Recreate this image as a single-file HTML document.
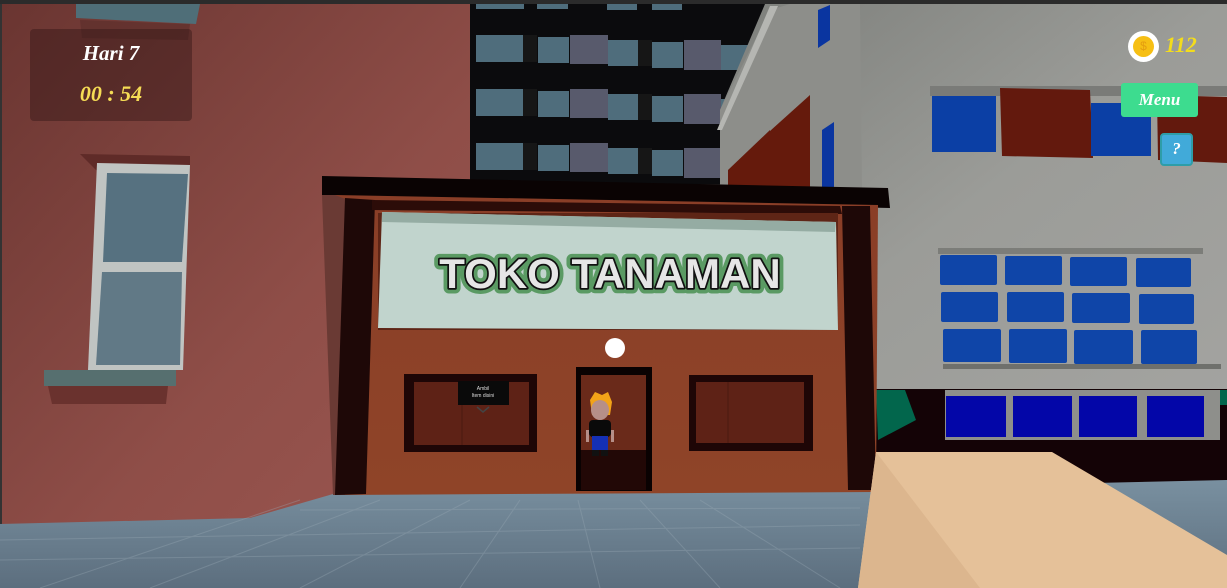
<!DOCTYPE html>
<html><head><meta charset="utf-8"><style>
html,body{margin:0;padding:0;width:1227px;height:588px;overflow:hidden;background:#2b2b2b}
svg{position:absolute;left:0;top:0}
.hud{position:absolute;font-family:"Liberation Serif",serif;font-style:italic;font-weight:bold}
</style></head><body>
<svg width="1227" height="588" viewBox="0 0 1227 588">
<defs>
<linearGradient id="red" x1="0" y1="0" x2="1" y2="1"><stop offset="0" stop-color="#6a3531"/><stop offset="0.6" stop-color="#8f4e48"/><stop offset="1" stop-color="#9a5650"/></linearGradient>
<linearGradient id="gray" x1="0" y1="0" x2="1" y2="1"><stop offset="0" stop-color="#7d7f7b"/><stop offset="0.5" stop-color="#9b9c98"/><stop offset="1" stop-color="#a3a3a0"/></linearGradient>
<linearGradient id="floor" x1="0" y1="0" x2="0" y2="1"><stop offset="0" stop-color="#7990a0"/><stop offset="1" stop-color="#5c6e7e"/></linearGradient>
<linearGradient id="shop" x1="0" y1="0" x2="0" y2="1"><stop offset="0" stop-color="#8a3e27"/><stop offset="1" stop-color="#8f4428"/></linearGradient>
</defs>
<rect x="0" y="0" width="1227" height="4" fill="#2b2b2b"/>
<rect x="2" y="4" width="470" height="520" fill="url(#red)"/>
<rect x="0" y="4" width="2" height="584" fill="#333"/>
<polygon points="76,4 200,4 196,24 76,18" fill="#4f6e78"/>
<polygon points="80,20 190,24 188,40 82,38" fill="#5a2d2a" opacity="0.6"/>
<polygon points="80,154 190,156 190,170 96,170" fill="#5f2b28"/>
<polygon points="97,163 190,165 183,370 88,370" fill="#c0c4c2"/>
<polygon points="107,173 188,174 182,262 103,262" fill="#567180"/>
<polygon points="102,272 182,272 180,365 96,365" fill="#567180" opacity="0.9"/>
<polygon points="44,370 176,370 176,386 44,386" fill="#566f6f"/>
<polygon points="48,386 168,386 166,404 52,404" fill="#6a322e"/>
<rect x="470" y="4" width="300" height="180" fill="#0b0b0d"/>
<g fill="#4f6d7c">
<rect x="476" y="4" width="48" height="5"/><rect x="537" y="4" width="31" height="5"/><rect x="607" y="4" width="30" height="6"/><rect x="652" y="4" width="30" height="6"/>
</g>
<g id="row">
<rect x="476" y="35" width="48" height="27" fill="#4f6d7c"/>
<rect x="523" y="35" width="14" height="27" fill="#161616"/>
<rect x="538" y="37" width="31" height="26" fill="#4f6d7c"/>
<rect x="570" y="35" width="38" height="29" fill="#585a6c"/>
<rect x="608" y="40" width="30" height="26" fill="#4f6d7c"/>
<rect x="638" y="40" width="14" height="26" fill="#161616"/>
<rect x="652" y="42" width="31" height="26" fill="#4f6d7c"/>
<rect x="684" y="40" width="37" height="30" fill="#585a6c"/>
<rect x="721" y="45" width="30" height="25" fill="#4f6d7c"/>
</g>
<use href="#row" y="54"/><use href="#row" y="108"/>
<polygon points="765,4 1227,4 1227,400 860,400 860,188 720,188 720,110" fill="url(#gray)"/>
<polygon points="720,110 770,10 790,4 860,4 862,190 720,190" fill="#8d8e8a"/>
<polygon points="717,130 770,6 778,6 722,130" fill="#b5b6b2"/>
<polygon points="760,140 810,95 810,188 760,188" fill="#651a0c"/>
<polygon points="728,170 770,130 770,188 728,188" fill="#651a0c"/>
<polygon points="818,10 830,5 830,40 818,48" fill="#0a35a0"/>
<polygon points="822,130 834,122 834,188 822,188" fill="#0a35a0"/>
<rect x="930" y="86" width="297" height="10" fill="#7a7b78"/>
<rect x="932" y="96" width="64" height="56" fill="#0b3fa5"/>
<polygon points="1000,88 1090,90 1093,158 1002,156" fill="#63190d"/>
<rect x="1091" y="103" width="60" height="53" fill="#0b3fa5"/>
<polygon points="1157,95 1227,97 1227,163 1158,160" fill="#63190d"/>
<rect x="938" y="248" width="265" height="6" fill="#7c7d79"/>
<g fill="#0f45a8">
<rect x="940" y="255" width="57" height="30" rx="2"/><rect x="1005" y="256" width="57" height="29" rx="2"/><rect x="1070" y="257" width="57" height="29" rx="2"/><rect x="1136" y="258" width="55" height="29" rx="2"/>
<rect x="941" y="292" width="57" height="30" rx="2"/><rect x="1007" y="292" width="57" height="30" rx="2"/><rect x="1072" y="293" width="58" height="30" rx="2"/><rect x="1139" y="294" width="55" height="30" rx="2"/>
<rect x="943" y="329" width="58" height="33" rx="2"/><rect x="1009" y="329" width="58" height="34" rx="2"/><rect x="1074" y="330" width="59" height="34" rx="2"/><rect x="1141" y="330" width="56" height="34" rx="2"/>
</g>
<rect x="943" y="364" width="278" height="5" fill="#6f706c"/>
<rect x="862" y="389" width="365" height="100" fill="#140306"/>
<polygon points="876,390 905,390 916,420 878,440" fill="#02664c"/>
<polygon points="1214,390 1227,390 1227,405 1217,405" fill="#02664c"/>
<rect x="945" y="390" width="275" height="50" fill="#8e8f8b"/>
<g fill="#0306a8">
<rect x="946" y="396" width="60" height="41"/><rect x="1013" y="396" width="59" height="41"/><rect x="1079" y="396" width="58" height="41"/><rect x="1147" y="396" width="57" height="41"/>
</g>
<polygon points="0,524 250,518 340,492 870,488 1227,480 1227,588 0,588" fill="url(#floor)"/>
<g stroke="#9aaab5" stroke-width="1" opacity="0.35">
<line x1="40" y1="588" x2="300" y2="500"/><line x1="150" y1="588" x2="380" y2="500"/><line x1="300" y1="588" x2="470" y2="500"/><line x1="460" y1="588" x2="520" y2="500"/><line x1="600" y1="588" x2="578" y2="500"/><line x1="720" y1="588" x2="640" y2="500"/><line x1="840" y1="588" x2="700" y2="500"/>
<line x1="0" y1="560" x2="860" y2="548"/><line x1="0" y1="540" x2="860" y2="525"/><line x1="300" y1="510" x2="860" y2="508"/>
</g>
<polygon points="322,176 888,188 890,208 322,195" fill="#0a0303"/>
<polygon points="335,195 878,205 876,492 336,495" fill="url(#shop)"/>
<polygon points="322,195 335,195 348,200 345,495 333,495" fill="#6a3a34"/>
<polygon points="345,198 375,200 366,494 335,495" fill="#1e0807"/>
<polygon points="842,206 870,206 876,490 848,490" fill="#1e0807"/>
<polygon points="372,200 840,206 842,214 372,210" fill="#2c0c08"/>
<rect x="378" y="213" width="460" height="117" fill="#5e2516"/>
<polygon points="382,212 836,222 838,330 378,328" fill="#c1d4cd"/>
<polygon points="382,212 836,222 835,232 382,222" fill="#95aca3"/>
<text x="610" y="288" text-anchor="middle" font-family="Liberation Sans,sans-serif" font-weight="bold" font-size="42" fill="#e6e6e6" stroke="#5a9a63" stroke-width="11" stroke-linejoin="round" paint-order="stroke">TOKO TANAMAN</text>
<text x="610" y="288" text-anchor="middle" font-family="Liberation Sans,sans-serif" font-weight="bold" font-size="42" fill="#e6e6e6" stroke="#111" stroke-width="3.5" stroke-linejoin="round" paint-order="stroke">TOKO TANAMAN</text>
<rect x="404" y="374" width="133" height="78" fill="#1e0606"/>
<rect x="414" y="382" width="115" height="63" fill="#5e2216"/>
<line x1="462" y1="382" x2="462" y2="445" stroke="#4a1a10"/>
<rect x="458" y="381" width="51" height="24" fill="#0a0a0a"/>
<text x="483" y="390" text-anchor="middle" font-family="Liberation Sans,sans-serif" font-size="5" fill="#ddd">Ambil</text>
<text x="483" y="397" text-anchor="middle" font-family="Liberation Sans,sans-serif" font-size="5" fill="#ddd">Item disini</text>
<polyline points="477,407 483,412 489,407" fill="none" stroke="#444" stroke-width="1.5"/>
<rect x="689" y="375" width="124" height="76" fill="#1e0606"/>
<rect x="696" y="382" width="108" height="61" fill="#5e2216"/>
<line x1="728" y1="382" x2="728" y2="443" stroke="#4a1a10"/>
<rect x="576" y="367" width="76" height="124" fill="#0a0202"/>
<rect x="581" y="375" width="65" height="75" fill="#6a2a1a"/>
<rect x="581" y="450" width="65" height="40" fill="#220806"/>
<polygon points="590,400 595,392 602,395 608,392 612,402 610,415 592,415" fill="#f2a318"/>
<ellipse cx="600" cy="410" rx="9" ry="10" fill="#b68f88"/>
<rect x="589" y="420" width="22" height="17" rx="4" fill="#0a0a0a"/>
<rect x="592" y="436" width="16" height="14" fill="#1530b5"/>
<rect x="592" y="450" width="7" height="6" fill="#111"/><rect x="601" y="450" width="7" height="6" fill="#111"/>
<rect x="586" y="430" width="3" height="12" fill="#b68f88"/><rect x="611" y="430" width="3" height="12" fill="#b68f88"/>
<circle cx="615" cy="348" r="10" fill="#fff"/>
<polygon points="876,452 1052,452 1227,555 1227,588 858,588" fill="#e5c199"/>
<polygon points="876,452 980,588 858,588" fill="#dcb68e"/>
</svg>
<div style="position:absolute;left:30px;top:29px;width:162px;height:92px;background:rgba(50,22,22,0.45);border-radius:4px"></div>
<div class="hud" style="left:30px;top:41px;width:162px;text-align:center;color:#fff;font-size:21px">Hari 7</div>
<div class="hud" style="left:30px;top:81px;width:162px;text-align:center;color:#f5dc55;font-size:22px">00 : 54</div>
<div style="position:absolute;left:1128px;top:31px;width:31px;height:31px;border-radius:50%;background:#fff"></div>
<div style="position:absolute;left:1133px;top:36px;width:21px;height:21px;border-radius:50%;background:#f6bf14;color:#e49d10;font:12px 'Liberation Sans',sans-serif;text-align:center;line-height:21px">$</div>
<div class="hud" style="left:1165px;top:32px;color:#f3dc1c;font-size:22px">112</div>
<div style="position:absolute;left:1121px;top:83px;width:77px;height:34px;border-radius:3px;background:#3ddc8f"></div>
<div class="hud" style="left:1121px;top:90px;width:77px;text-align:center;color:#fff;font-size:17px">Menu</div>
<div style="position:absolute;left:1160px;top:133px;width:29px;height:29px;border-radius:4px;background:#41aad9;border:2px solid #2e9da8"></div>
<div class="hud" style="left:1162px;top:139px;width:29px;text-align:center;color:#fff;font-size:17px">?</div>
</body></html>
